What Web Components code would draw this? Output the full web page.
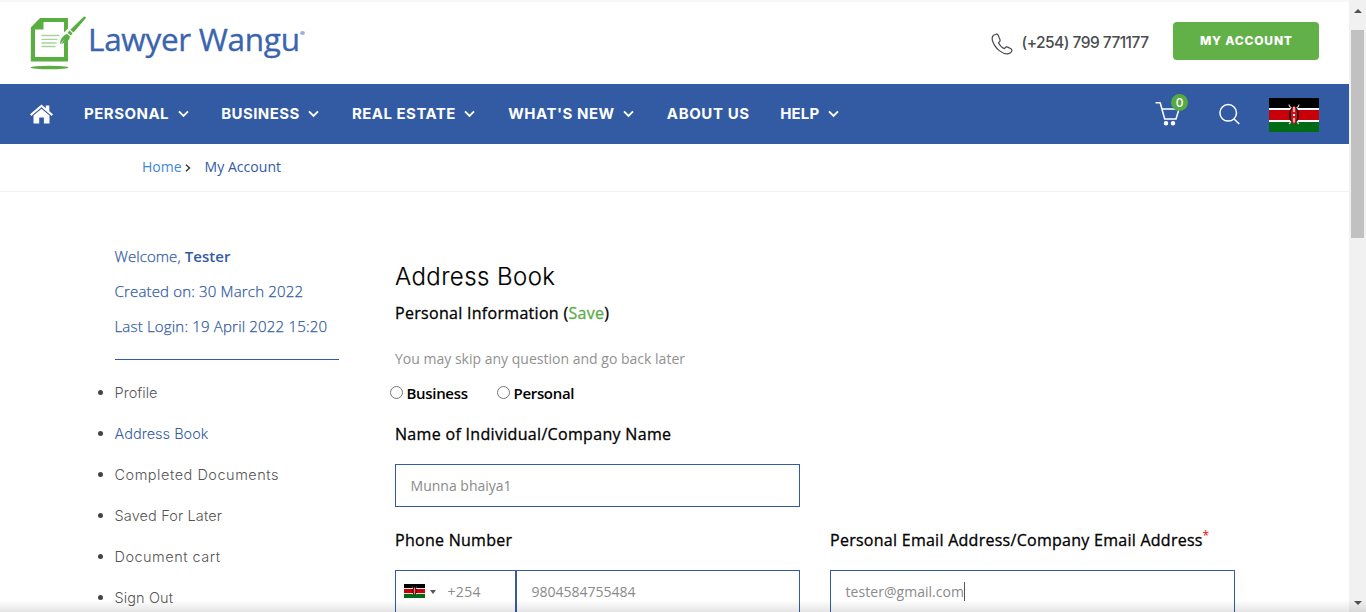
<!DOCTYPE html>
<html lang="en"><head><meta charset="utf-8"><title>Lawyer Wangu - My Account</title>
<style>html,body{margin:0;height:100%;overflow:hidden;background:#fff;font-family:"Open Sans","Noto Sans",sans-serif}</style>
</head><body><lw-page></lw-page>
<script>
const define=(name,html,extra)=>{
  const t=document.createElement('template');t.innerHTML=html;
  customElements.define(name,class extends HTMLElement{
    constructor(){super();this.attachShadow({mode:'open'}).appendChild(t.content.cloneNode(true));}
    connectedCallback(){if(extra)extra(this,this.shadowRoot);}
  });
};
/* Single-line label tracked to a fixed measure */
define('lw-text',`<style>:host{display:inline-block;white-space:nowrap;flex:none}span{display:inline-block}</style><span><slot></slot></span>`,(h,r)=>{
  const w=+h.getAttribute('w'),s=r.querySelector('span'),n=h.textContent.trim().length;
  if(!w)return;
  h.style.width=w+'px';
  s.style.letterSpacing=((w-s.getBoundingClientRect().width)/(n-1))+'px';
});
define('lw-flag',`<style>:host{display:block;flex:none;width:50px;height:34px}svg{display:block;width:100%;height:100%}</style>
<svg viewBox="0 0 50 34" preserveAspectRatio="none"><path fill="#000" d="M0 0h50v10H0z"/><path fill="#fff" d="M0 10h50v14H0z"/><path fill="#c8000a" d="M0 12h50v10H0z"/><path fill="#006b14" d="M0 24h50v10H0z"/>
<path d="M20 6.500q0 2 2 3l1.500 3M30 6.500q0 2-2 3l-1.500 3M20 26l2-2M30 26l-2-2" fill="none" stroke="#ccc" stroke-width="1.200"/>
<ellipse cx="25" cy="17" rx="5" ry="8.200" fill="#170000"/><path d="M25 7.500c2.500 3 3.200 6 3.200 9.500s-.7 7-3.200 9.500c-2.500-2.500-3.200-6-3.200-9.500s.7-6.500 3.200-9.500z" fill="#d0101a"/><path d="M25 9v5M25 20v4.500" stroke="#f3a5a5" stroke-width="2.200"/><path d="M24 16h2v2h-2z" fill="#fff"/></svg>`);
define('lw-logo',`<style>:host{display:flex;width:276px;height:56px;color:#3a64ad}svg{flex:none;display:block}
.n{font:400 31.500px/44px "Open Sans","Noto Sans",sans-serif;margin:2px 0 0 0;height:44px;-webkit-text-stroke:.35px #3a64ad}i{width:5px;height:4px;flex:none;border-radius:50%;background:#9db4dc;margin:16px 0 0 0}</style>
<svg width="58" height="56" viewBox="0 0 58 56"><path fill="#59ae42" d="M10 3h28v10.500l-4 4V7H13.500v7.500H5V42h29V28l4-4v22.500H.8V12.500z"/>
<path d="M11.500 20.500h18M11.500 24.300h16M11.500 28h15M11.500 31.500h14" stroke="#a8d39b" stroke-width="1.300"/>
<path fill="#59ae42" d="M53.700 1.800q2-1 2.200 1.200L43.500 17.500l-3.200-2.800zM39.500 15.500l3.200 2.900-2 2.100-3.100-2.800zM36.800 18.700l3.200 2.700q-1 5-5 6l-4 1.800 4-5.600-5 5.600q0-7 6.800-10.500z"/>
<ellipse cx="19.500" cy="52.500" rx="19" ry="1.800" fill="#59ae42"/></svg>
<lw-text class="n" w="212">Lawyer Wangu</lw-text><i></i>`);
define('lw-header',`<style>:host{display:flex;box-sizing:border-box;height:84px;padding-left:30px;padding-right:30px;border-top:2px solid #f7f7f7;align-items:flex-start}
lw-logo{margin-top:13px}.ph{display:flex;margin-left:auto;margin-top:26px;align-items:center;height:30px}.ph svg{margin:2px 9px 0 0}.ph lw-text{font:500 15.500px/30px Inter,sans-serif;color:#4b4b50}
.b{width:146px;height:38px;margin:20px 0 0 24px;border-radius:4px;background:#62b148;color:#fff;display:flex;align-items:center;justify-content:center;font:800 12px/36px Inter,sans-serif}</style>
<lw-logo></lw-logo><div class="ph"><svg width="22" height="22" viewBox="0 0 22 22" fill="none" stroke="#4b4b50" stroke-width="1.200" stroke-linejoin="round"><path d="M5.200 1.200 2.500 2.300Q.7 3.800 1.300 7 3 13.500 8.300 17.600q5 4 9.200 3.100 2.400-.5 3.400-2.700.2-1.400-1-2.200l-3.200-1.700q-1.400-.6-2.300.4l-1 1.200q-3.700-1.500-6-5.900l1-1q1.100-.9.500-2.300L7.200 2.300Q6.500 1 5.200 1.200z"/></svg><lw-text w="127.500">(+254) 799 771177</lw-text></div>
<div class="b"><lw-text w="92">MY ACCOUNT</lw-text></div>`);
define('lw-nav-item',`<style>:host{display:flex;align-items:center;flex:none}svg{margin-left:9px}:host([plain]) svg{display:none}</style><slot></slot><svg width="11" height="8" viewBox="0 0 11 8"><path d="M1 1.300 5.500 5.800 10 1.300" fill="none" stroke="#fff" stroke-width="1.900"/></svg>`);
define('lw-nav',`<style>:host{display:flex;box-sizing:border-box;height:60px;padding:0 30px;background:#325ba4;color:#fff;align-items:center;font:700 15px/58px Inter,sans-serif}
.home{margin-right:31px;margin-top:-1px}lw-nav-item{margin-right:32.700px}.end{margin-left:auto;display:flex;align-items:center}.cart{position:relative;width:34px;height:32px}.cart svg{display:block}
.badge{position:absolute;left:16px;top:-4px;width:17px;height:17px;border-radius:50%;background:#57a941;text-align:center;font:500 12px/17px Inter,sans-serif}.s{margin:0 29px 1px 30px}lw-flag{margin-top:2px}</style>
<svg class="home" width="23" height="20" viewBox="0 0 23 20" fill="#fff"><path d="M11.500.5 15.800 4.200V1.400h3.500v5.800L23 10.300 21.700 11.900 11.500 3.200 1.300 11.900 0 10.300z"/><path d="M3.500 11.400 11.500 4.700l8 6.700V19.500h-5.600v-6H9.200v6H3.500z"/></svg>
<lw-nav-item><lw-text w="84.600">PERSONAL</lw-text></lw-nav-item><lw-nav-item><lw-text w="78">BUSINESS</lw-text></lw-nav-item><lw-nav-item><lw-text w="103.500">REAL ESTATE</lw-text></lw-nav-item><lw-nav-item><lw-text w="106">WHAT'S NEW</lw-text></lw-nav-item><lw-nav-item plain style="margin-right:31px"><lw-text w="82.300">ABOUT US</lw-text></lw-nav-item><lw-nav-item><lw-text w="39">HELP</lw-text></lw-nav-item>
<div class="end"><div class="cart"><svg width="28" height="30" viewBox="0 0 28 30" fill="none" stroke="#fff" stroke-width="1.500" stroke-linejoin="round"><path d="M.5 4.800H5.200L9.700 21H21L24 11H7"/><circle cx="11" cy="25.200" r="1.500" fill="#fff"/><circle cx="18" cy="25.200" r="1.500" fill="#fff"/></svg><span class="badge">0</span></div>
<svg class="s" width="21" height="22" viewBox="0 0 21 22" fill="none" stroke="#fff" stroke-width="1.500"><circle cx="9.200" cy="9.800" r="8.300"/><path d="M15 16 20.300 21"/></svg><lw-flag></lw-flag></div>`);
define('lw-crumbs',`<style>:host{display:flex;box-sizing:border-box;height:48px;border-bottom:1px solid #f1f1fa;padding-left:142px;font-size:14px;line-height:46px;color:#325ba4}.h{color:#3f87d9}svg{margin:20px 13.500px 0 3.500px}</style>
<lw-text class="h" w="39.500">Home</lw-text><svg width="6" height="8" viewBox="0 0 6 8"><path d="M1 .8 4.500 4 1 7.200" fill="none" stroke="#333" stroke-width="1.400"/></svg><lw-text w="76.500">My Account</lw-text>`);
define('lw-link',`<style>:host{display:flex;align-items:center;height:41px;color:#555;font:300 14.500px/41px Inter,sans-serif}:host([active]){color:#325ba4}i{width:5px;height:5px;border-radius:50%;background:#444;margin:0 12px 1px 0}</style><i></i><slot></slot>`);
define('lw-side',`<style>:host{display:block;width:242px;padding-top:47px;box-sizing:border-box}.u{margin-left:17px;width:224px;border-bottom:1px solid #325ba4;height:120px;color:#325ba4;font-size:15px;font-weight:300;line-height:35px;-webkit-text-stroke:.25px #325ba4}.u div{height:35px}b{font-weight:600;-webkit-text-stroke:0}nav{padding-top:12px}</style>
<div class="u"><div><lw-text w="116">Welcome, <b>Tester</b></lw-text></div><div><lw-text w="188.500">Created on: 30 March 2022</lw-text></div><div><lw-text w="212.500">Last Login: 19 April 2022 15:20</lw-text></div></div>
<nav><lw-link><lw-text w="43">Profile</lw-text></lw-link><lw-link active><lw-text w="94">Address Book</lw-text></lw-link><lw-link><lw-text w="164">Completed Documents</lw-text></lw-link><lw-link><lw-text w="107.500">Saved For Later</lw-text></lw-link><lw-link><lw-text w="105.500">Document cart</lw-text></lw-link><lw-link><lw-text w="58.500">Sign Out</lw-text></lw-link></nav>`);
define('lw-radio',`<style>:host{display:flex;align-items:center}i{width:11px;height:11px;border:1px solid #767676;border-radius:50%;margin:0 3.500px 2px 0}</style><i></i><slot></slot>`);
define('lw-field',`<style>:host{display:flex;box-sizing:border-box;height:43px;border:1px solid #325ba4;padding-left:14.600px;font-size:14px;line-height:42px;color:#8a8a8a}</style><slot></slot>`);
define('lw-form',`<style>:host{display:block;padding-top:66px;color:#000}.t{font:300 24px/38px Inter,sans-serif;height:43px;-webkit-text-stroke:.15px #000}.l{font-size:16px;line-height:24px;height:24px;-webkit-text-stroke:.3px}.sv{color:#5aab46}.n{font-size:14px;line-height:24px;height:24px;color:#919191;margin-top:22px}
.r{display:flex;height:24px;line-height:24px;margin:10px 0 0 -5px;font-size:15px;font-weight:600}.r lw-radio+lw-radio{margin-left:29px}.f{margin-top:18px}.g{display:grid;grid-template-columns:405px 405px;column-gap:30px;margin-top:21px}.p{display:flex}.one{width:405px}.pc{width:122px;padding-left:8px;border-right-width:2px}.pn{flex:1;border-left:0}
.pc lw-flag{width:21px;height:14px;margin-top:13px}.ar{border:3px solid transparent;border-top:4px solid #555;border-bottom:0;height:0;margin:19px 11.500px 0 5px}.st{color:red;font-size:12px;font-weight:400;height:16px;line-height:16px;margin-top:0;-webkit-text-stroke:0}.gl{display:flex}.c{width:1px;height:19px;background:#555;margin-top:11px}</style>
<div class="t"><lw-text w="160">Address Book</lw-text></div><div class="l"><lw-text w="214">Personal Information (<span class="sv">Save</span>)</lw-text></div>
<div class="n"><lw-text w="290">You may skip any question and go back later</lw-text></div>
<div class="r"><lw-radio><lw-text w="61.500">Business</lw-text></lw-radio><lw-radio><lw-text w="61">Personal</lw-text></lw-radio></div>
<div class="l" style="margin-top:17px"><lw-text w="276">Name of Individual/Company Name</lw-text></div><lw-field class="f one"><lw-text w="101">Munna bhaiya1</lw-text></lw-field>
<div class="g"><div><div class="l"><lw-text w="117">Phone Number</lw-text></div><div class="p f"><lw-field class="pc"><lw-flag></lw-flag><i class="ar"></i><lw-text w="33">+254</lw-text></lw-field><lw-field class="pn"><lw-text w="104">9804584755484</lw-text></lw-field></div></div>
<div><div class="l gl"><lw-text w="372.500">Personal Email Address/Company Email Address</lw-text><span class="st">*</span></div><lw-field class="f"><lw-text w="118.400">tester@gmail.com</lw-text><i class="c"></i></lw-field></div></div>`);
define('lw-scrollbar',`<style>:host{display:flex;flex-direction:column;align-items:center;width:17px;height:612px;background:#f1f1f1;box-sizing:border-box;padding:9px 0 7px}i{border:4px solid transparent}.u{border-top:0;border-bottom-color:#505050}.d{border-bottom:0;border-top-color:#505050;margin-top:auto}.k{width:13px;height:208px;background:#c1c1c1;margin-top:17px}</style><i class="u"></i><div class="k"></div><i class="d"></i>`);
define('lw-page',`<style>:host{display:flex;width:1366px;height:612px;overflow:hidden;position:relative}main{width:1349px;height:612px;overflow:hidden}.c{display:flex;padding-left:97.500px}lw-form{margin-left:55.500px}.sh{position:absolute;left:0;right:0;bottom:0;height:12px;background:linear-gradient(transparent,rgba(0,0,0,.1));pointer-events:none}</style>
<main><lw-header></lw-header><lw-nav></lw-nav><lw-crumbs></lw-crumbs><div class="c"><lw-side></lw-side><lw-form></lw-form></div></main><lw-scrollbar></lw-scrollbar><div class="sh"></div>`);
</script></body></html>
